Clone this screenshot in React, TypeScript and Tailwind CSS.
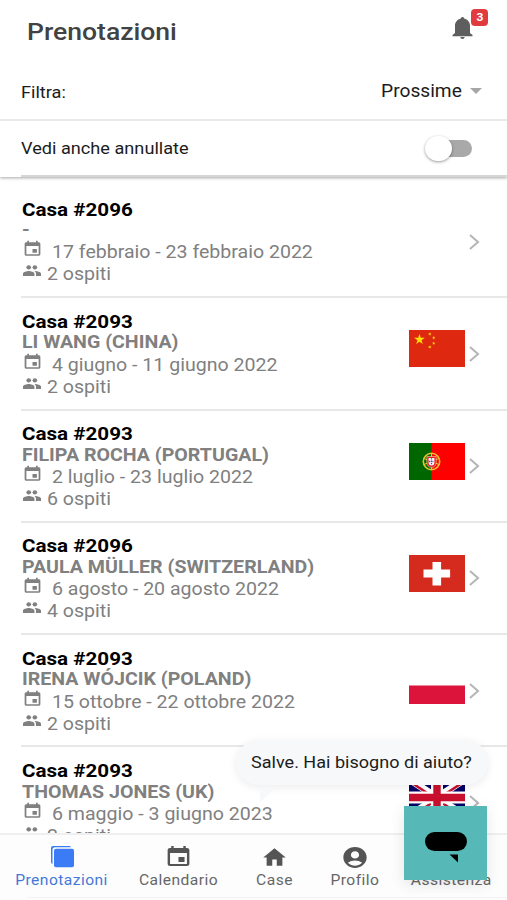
import { MdAccountCircle, MdEvent, MdHome } from "react-icons/md";

const bookings = [
  { house: "2096", guest: "-", dates: "17 febbraio - 23 febbraio 2022", guests: 2, flag: "" },
  { house: "2093", guest: "LI WANG (CHINA)", dates: "4 giugno - 11 giugno 2022", guests: 2, flag: "cn" },
  { house: "2093", guest: "FILIPA ROCHA (PORTUGAL)", dates: "2 luglio - 23 luglio 2022", guests: 6, flag: "pt" },
  { house: "2096", guest: "PAULA MÜLLER (SWITZERLAND)", dates: "6 agosto - 20 agosto 2022", guests: 4, flag: "ch" },
  { house: "2093", guest: "IRENA WÓJCIK (POLAND)", dates: "15 ottobre - 22 ottobre 2022", guests: 2, flag: "pl" },
  { house: "2093", guest: "THOMAS JONES (UK)", dates: "6 maggio - 3 giugno 2023", guests: 2, flag: "gb" },
];

const star = "M0 -1L.2245 -.309L.951 -.309L.363 .118L.588 .809L0 .382L-.588 .809L-.363 .118L-.951 -.309L-.2245 -.309Z";

function Flag({ code }: { code: string }) {
  return (
    <svg className="h-[37px] w-[56px] shrink-0" viewBox="0 0 56 37" preserveAspectRatio="none">
      {code === "cn" && (
        <>
          <rect width="56" height="37" fill="#de2910" />
          <g fill="#ffde00">
            <path d={star} transform="translate(10.5 9.5) scale(5.6)" />
            <path d={star} transform="translate(20.8 4) scale(1.8) rotate(20)" />
            <path d={star} transform="translate(24.7 7.8) scale(1.8) rotate(45)" />
            <path d={star} transform="translate(24.7 13.2) scale(1.8)" />
            <path d={star} transform="translate(20.8 17) scale(1.8) rotate(20)" />
          </g>
        </>
      )}
      {code === "pt" && (
        <>
          <rect width="56" height="37" fill="#f00" />
          <rect width="22.5" height="37" fill="#060" />
          <circle cx="22.5" cy="18.5" r="8.2" fill="none" stroke="#e8c52c" strokeWidth="1.6" />
          <path d="M15 15.5L30 21.5M15 21.5L30 15.5M22.5 10V27" stroke="#e8c52c" strokeWidth="1" />
          <path d="M17.8 13.5h9.4v6a4.7 5 0 0 1-9.4 0z" fill="#e0202a" stroke="#f3dc9b" strokeWidth=".6" />
          <path d="M19.6 15h5.8v4.6a2.9 3 0 0 1-5.8 0z" fill="#fff" />
          <path d="M22.5 15.3v7M20 18.5h5" stroke="#3c4fa0" strokeWidth="1.3" strokeDasharray="1.3 1" />
        </>
      )}
      {code === "ch" && (
        <>
          <rect width="56" height="37" fill="#d52b1e" />
          <path d="M23.5 7h8.6v7.5h9v8h-9V30.5h-8.6v-8H14.5v-8h9z" fill="#fff" />
        </>
      )}
      {code === "pl" && (
        <>
          <rect width="56" height="19" fill="#fff" />
          <rect y="18.5" width="56" height="18.5" fill="#dc143c" />
        </>
      )}
      {code === "gb" && (
        <>
          <rect width="56" height="37" fill="#006" />
          <path d="M0 0L56 37M56 0L0 37" stroke="#fff" strokeWidth="7" />
          <path d="M0 0L28 18.5M56 37L28 18.5" stroke="#c8102e" strokeWidth="2.4" transform="translate(-1.5 1)" />
          <path d="M56 0L28 18.5M0 37L28 18.5" stroke="#c8102e" strokeWidth="2.4" transform="translate(1.5 1)" />
          <path d="M28 0V37M0 18.5H56" stroke="#fff" strokeWidth="12" />
          <path d="M28 0V37M0 18.5H56" stroke="#c8102e" strokeWidth="7.4" />
        </>
      )}
    </svg>
  );
}

function PeopleIcon() {
  return (
    <svg className="h-[11px] w-[18px]" viewBox="1 5 22 14" preserveAspectRatio="none" fill="currentColor">
      <circle cx="8" cy="8" r="2.8" />
      <circle cx="15.5" cy="8" r="2.8" />
      <path d="M8 12.7c-2.33 0-7 1.17-7 3.5V19h14v-2.8c0-2.33-4.67-3.5-7-3.5zM15.8 12.7c-.3 0-.6 0-.9.05 1.3.9 2 2 2 3.45V19H23v-2.8c0-2.33-4.67-3.5-7.2-3.5z" />
    </svg>
  );
}

function BookingRow({ booking }: { booking: (typeof bookings)[number] }) {
  return (
    <div className="ml-[21px] flex h-[112.3px] shrink-0 border-b-2 border-[#e8e8e8] text-[17.5px] leading-[22px] text-[#808080]">
      <div className="flex-1 whitespace-nowrap pt-[12.6px] pl-[0.5px]">
        <h2 className="h-[21.5px] w-max origin-left scale-x-[1.145] text-[18px] font-bold text-black">Casa #{booking.house}</h2>
        <h3 className="h-[21.4px] w-max origin-left scale-x-[1.12] font-bold leading-[21px]">{booking.guest}</h3>
        <div className="flex h-[22px]">
          <MdEvent preserveAspectRatio="none" className="-mt-px mr-[9px] h-[18px] w-[21px]" />
          <p className="w-max origin-left scale-x-[1.117]">{booking.dates}</p>
        </div>
        <div className="flex h-[22px]">
          <div className="mr-[6px] pt-[2px] pl-px">
            <PeopleIcon />
          </div>
          <p className="w-max origin-left scale-x-[1.117]">{booking.guests} ospiti</p>
        </div>
      </div>
      <div className="mt-[32px] flex h-[37px] w-[98px] shrink-0">
        {booking.flag ? <Flag code={booking.flag} /> : <div className="w-[56px]" />}
        <svg className="mt-[15.5px] ml-[4px] h-[16px] w-[11px]" viewBox="0 0 11 16" fill="none" stroke="#b5b5b5" strokeWidth="2">
          <path d="M1 1L9 8L1 15" />
        </svg>
      </div>
    </div>
  );
}

export default function App() {
  return (
    <div className="relative flex h-[900px] w-[507px] flex-col overflow-hidden bg-white font-['Roboto',sans-serif] text-[#1c1c1c]">
      {/* Header */}
      <header className="z-10 shrink-0 bg-white shadow-[0_1px_3px_rgba(0,0,0,0.35)]">
        <div className="flex h-[62px] items-center justify-between pr-[34px] pl-[26.5px]">
          <h1 className="mt-px origin-left scale-x-[1.105] text-[24px] font-medium text-[#424242]">Prenotazioni</h1>
          <div className="relative mt-[-6px]">
            <svg className="h-[22px] w-[21px]" viewBox="0 0 21 22" fill="#5e5e5e">
              <path d="M10.5 0c-.9 0-1.5.6-1.7 1.5C5.2 2.4 3 5.2 3 9v7L.5 18v1.2h20V18L18 16V9c0-3.8-2.2-6.600-5.800-7.500C12 .6 11.400 0 10.500 0zM8.300 20c.2 1.200 1 1.900 2.200 1.900s2-.7 2.200-1.900z" />
            </svg>
            <span className="absolute -top-[8px] left-[19px] flex h-[17px] w-[17px] items-center justify-center rounded-[4px] bg-[#e03c3f] text-[10px] font-bold text-white">
              <span className="scale-x-[1.2]">3</span>
            </span>
          </div>
        </div>
        <div className="flex h-[59px] items-center justify-between border-b-2 border-[#e8e8e8] pr-[25px] pl-[21px]">
          <span className="mt-[5px] origin-left scale-x-[1.1] text-[16.5px]">Filtra:</span>
          <div className="flex items-center">
            <span className="mr-[8px] origin-right scale-x-[1.065] text-[18px]">Prossime</span>
            <svg className="h-[6px] w-[12px]" viewBox="0 0 12 6" fill="#a6a6a6">
              <path d="M0 0H12L6 6Z" />
            </svg>
          </div>
        </div>
        <div className="ml-[21px] flex h-[56px] items-center justify-between border-b-2 border-[#d6d6d6] pr-[35px]">
          <span className="mt-[2px] origin-left scale-x-[1.1] text-[16.5px]">Vedi anche annullate</span>
          <div className="flex h-[17px] w-[42px] items-center rounded-full bg-[#a9a9a9]">
            <div className="-ml-[5px] h-[25px] w-[27px] shrink-0 rounded-full bg-white shadow-[0_1px_3px_rgba(0,0,0,0.4)]" />
          </div>
        </div>
      </header>

      {/* Bookings */}
      <main className="flex min-h-0 flex-1 flex-col overflow-hidden pt-[9px]">
        {bookings.map((booking) => (
          <BookingRow key={booking.guest} booking={booking} />
        ))}
      </main>

      {/* Tabs */}
      <nav className="relative grid h-[67px] shrink-0 grid-cols-[124px_108px_84px_78px_114px] border-t-2 border-[#efefef] bg-[#fdfdfd] text-[14px] tracking-[0.4px] text-[#666]">
        <div className="flex flex-col items-center pt-[10px] text-[#4478d8]">
          <svg className="h-[24px] w-[25px]" viewBox="0 0 25 24" fill="#3b7cf6">
            <path d="M3 1H19a2 2 0 0 1 2 1.3H5a2.5 2.5 0 0 0-2.5 2.5V19A2 2 0 0 1 1 17V3a2 2 0 0 1 2-2z" />
            <rect x="4" y="3.8" width="20" height="18.5" rx="2" />
          </svg>
          <span className="mt-px scale-x-[1.115]">Prenotazioni</span>
        </div>
        <div className="flex flex-col items-center pt-[10px]">
          <MdEvent preserveAspectRatio="none" className="h-[24px] w-[29px] text-[#555]" />
          <span className="mt-px scale-x-[1.115]">Calendario</span>
        </div>
        <div className="flex flex-col items-center pt-[10px]">
          <MdHome preserveAspectRatio="none" className="h-[25px] w-[27px] text-[#555]" />
          <span className="scale-x-[1.115]">Case</span>
        </div>
        <div className="flex flex-col items-center pt-[10px]">
          <MdAccountCircle preserveAspectRatio="none" className="h-[25px] w-[28px] text-[#555]" />
          <span className="scale-x-[1.115]">Profilo</span>
        </div>
        <div className="flex flex-col items-center pt-[35px]">
          <span className="scale-x-[1.115]">Assistenza</span>
        </div>
        <div className="absolute right-0 bottom-[2px] left-[27px] h-px bg-[#f3f3f3]" />
      </nav>

      {/* Help chat */}
      <div className="absolute top-[740px] left-[236px] z-20 flex h-[45px] w-[252px] items-center rounded-full bg-[#f6f8f9] pl-[15px] text-[17px] shadow-[0_2px_10px_rgba(0,0,0,0.08)]">
        <span className="origin-left scale-x-[1.062] whitespace-nowrap">Salve. Hai bisogno di aiuto?</span>
        <svg className="absolute top-[48px] left-[24px] h-[14px] w-[16px]" viewBox="0 0 16 14" fill="#f6f8f9">
          <path d="M0 0H16L0 14Z" />
        </svg>
      </div>
      <div className="absolute top-[806px] left-[404px] z-20 h-[74px] w-[83px] bg-[#56b9b7] shadow-[0_4px_14px_rgba(0,0,0,0.1)]">
        <svg className="h-full w-full" viewBox="0 0 83 74">
          <rect x="21" y="26" width="42" height="19" rx="9.5" />
          <path d="M45.5 48.5H54V56.5Z" />
        </svg>
      </div>
    </div>
  );
}
